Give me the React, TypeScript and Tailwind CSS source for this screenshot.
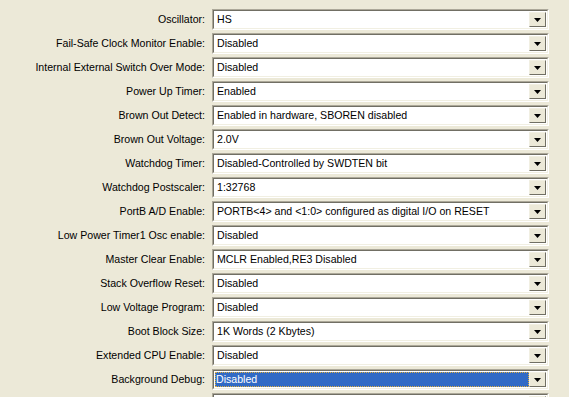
const rows: [string, string][] = [
  ["Oscillator:", "HS"],
  ["Fail-Safe Clock Monitor Enable:", "Disabled"],
  ["Internal External Switch Over Mode:", "Disabled"],
  ["Power Up Timer:", "Enabled"],
  ["Brown Out Detect:", "Enabled in hardware, SBOREN disabled"],
  ["Brown Out Voltage:", "2.0V"],
  ["Watchdog Timer:", "Disabled-Controlled by SWDTEN bit"],
  ["Watchdog Postscaler:", "1:32768"],
  ["PortB A/D Enable:", "PORTB<4> and <1:0> configured as digital I/O on RESET"],
  ["Low Power Timer1 Osc enable:", "Disabled"],
  ["Master Clear Enable:", "MCLR Enabled,RE3 Disabled"],
  ["Stack Overflow Reset:", "Disabled"],
  ["Low Voltage Program:", "Disabled"],
  ["Boot Block Size:", "1K Words (2 Kbytes)"],
  ["Extended CPU Enable:", "Disabled"],
  ["Background Debug:", "Disabled"],
  ["", ""],
];

function Combo({ value, selected }: { value: string; selected?: boolean }) {
  return (
    <div className="w-[337px] h-[21px] border border-t-[#aca899] border-l-[#aca899] border-b-white border-r-white">
      <div className="flex h-full border border-t-[#716f64] border-l-[#716f64] border-b-[#f1efe2] border-r-[#f1efe2] bg-white p-px">
        <div className="flex-1 flex items-center min-w-0">
          {selected ? (
            <div className="h-full flex-1 flex items-center bg-[#316ac5] text-white outline-1 outline-dotted outline-[#e0b040] -outline-offset-1 pl-px">
              {value}
            </div>
          ) : (
            <span className="pl-0.5 whitespace-nowrap">{value}</span>
          )}
        </div>
        <div className="w-[17px] h-full bg-[#ece9d8] border border-t-[#f1efe2] border-l-[#f1efe2] border-b-[#716f64] border-r-[#716f64] flex items-center justify-center">
          <svg width="7" height="4" viewBox="0 0 7 4">
            <path d="M0 0h7L3.5 4z" fill="#000" />
          </svg>
        </div>
      </div>
    </div>
  );
}

export default function App() {
  return (
    <div
      className="w-[569px] h-[397px] overflow-hidden bg-[#ece9d8] pt-[9px] flex flex-col gap-[3px] text-[10.6px] text-black"
      style={{ fontFamily: '"Liberation Sans", Arial, sans-serif' }}
    >
      {rows.map(([label, value], i) => (
        <div key={i} className="flex items-center shrink-0">
          <div className="w-[206px] text-right pr-px whitespace-nowrap">{label}</div>
          <div className="ml-[6px]">
            <Combo value={value} selected={i === 15} />
          </div>
        </div>
      ))}
    </div>
  );
}
